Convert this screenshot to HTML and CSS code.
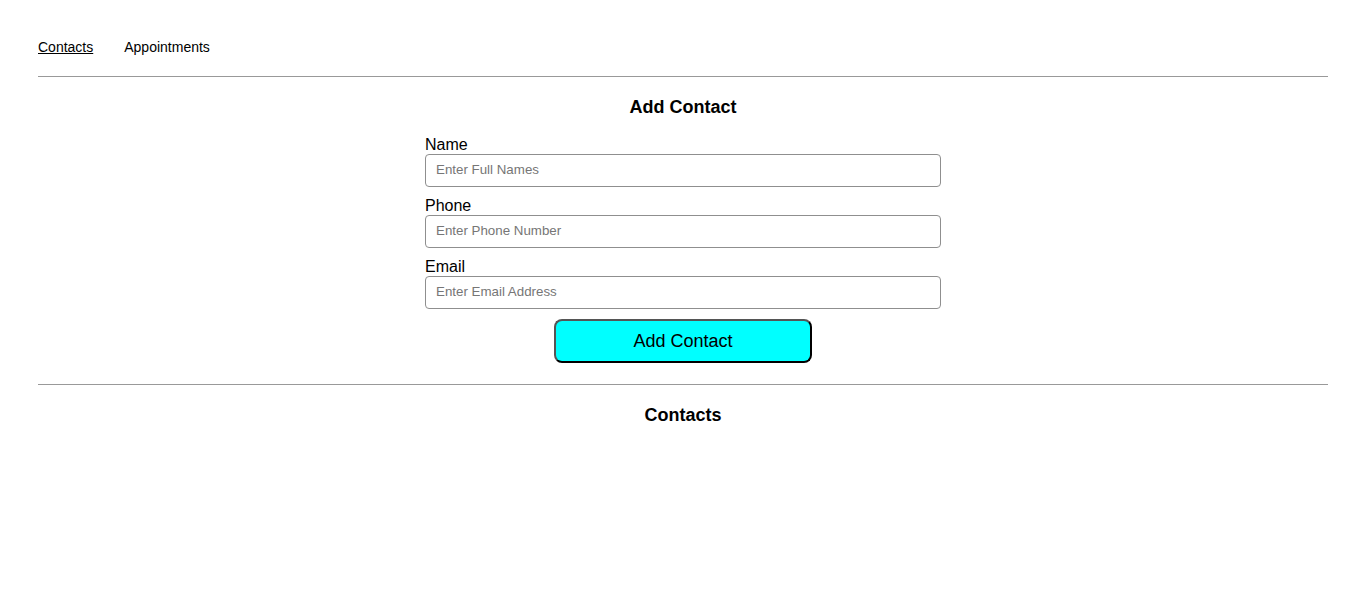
FILE: index.html
```html
<!DOCTYPE html>
<html>
<head>
<meta charset="utf-8">
<link rel="stylesheet" href="styles.css">
</head>
<body>
<div class="page">
  <nav class="nav">
    <a class="nav-link active" href="#">Contacts</a>
    <a class="nav-link" href="#">Appointments</a>
  </nav>
  <hr class="rule">
  <section class="section">
    <h2 class="title">Add Contact</h2>
    <form class="form">
      <div class="field">
        <label class="label">Name</label>
        <input class="input" type="text" placeholder="Enter Full Names">
      </div>
      <div class="field">
        <label class="label">Phone</label>
        <input class="input" type="text" placeholder="Enter Phone Number">
      </div>
      <div class="field">
        <label class="label">Email</label>
        <input class="input" type="text" placeholder="Enter Email Address">
      </div>
      <button class="submit" type="button">Add Contact</button>
    </form>
  </section>
  <hr class="rule rule-bottom">
  <section class="section">
    <h2 class="title title-list">Contacts</h2>
  </section>
</div>
</body>
</html>
```
FILE: styles.css
```css
html, body {
  margin: 0;
  padding: 0;
  background: #fff;
}
body {
  font-family: "Liberation Sans", Arial, sans-serif;
  color: #000;
}
.page {
  padding: 38px 38px 0 38px;
}
.nav {
  display: flex;
  gap: 31px;
  height: 18px;
  align-items: center;
}
.nav-link {
  font-size: 14px;
  line-height: 18px;
  color: #000;
  text-decoration: none;
}
.nav-link.active {
  text-decoration: underline;
}
.rule {
  margin: 20px 0 0 0;
  border: 0;
  border-top: 1px solid #999;
  height: 0;
}
.rule-bottom {
  margin-top: 21px;
}
.section {
  display: flex;
  flex-direction: column;
  align-items: center;
}
.title {
  margin: 19px 0 0 0;
  font-size: 18px;
  line-height: 22px;
  font-weight: bold;
}
.title-list {
  margin-top: 19px;
}
.form {
  margin-top: 18px;
  width: 516px;
  display: flex;
  flex-direction: column;
  gap: 10px;
  align-items: center;
}
.field {
  width: 100%;
  display: flex;
  flex-direction: column;
}
.label {
  font-size: 16px;
  line-height: 18px;
}
.input {
  box-sizing: border-box;
  width: 100%;
  height: 33px;
  margin: 0;
  padding: 0 10px 2px 10px;
  border: 1px solid #8f8f8f;
  border-radius: 4px;
  font-family: "Liberation Sans", Arial, sans-serif;
  font-size: 13.333px;
  color: #000;
  background: #fff;
}
.input::placeholder {
  color: #767676;
}
.submit {
  box-sizing: border-box;
  margin-top: 0;
  width: 258px;
  height: 44px;
  background: #00ffff;
  border: 2px solid;
  border-color: #555 #000 #000 #555;
  border-radius: 8px;
  font-family: "Liberation Sans", Arial, sans-serif;
  font-size: 18px;
  color: #000;
  padding: 0;
}
```
